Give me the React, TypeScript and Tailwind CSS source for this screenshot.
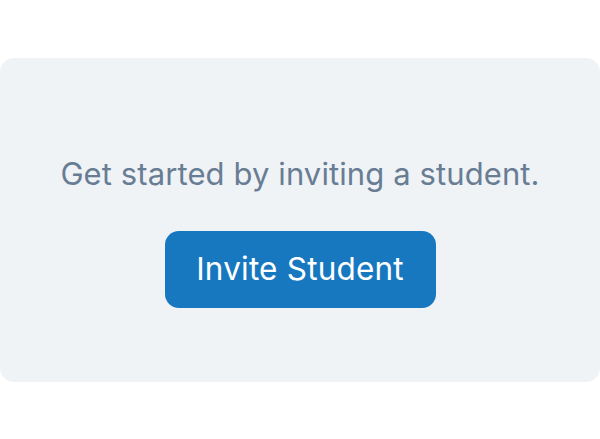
export default function App() {
  return (
    <div className="w-[600px] h-[439px] bg-white flex items-center font-['Inter',sans-serif]">
      <div className="w-full h-[324px] bg-[#eff3f6] rounded-[14px] flex flex-col items-center pt-[96px]">
        <p className="text-[31px] leading-[40px] tracking-[0.1px] text-[#687d94]">
          Get started by inviting a student.
        </p>
        <button
          type="button"
          className="mt-[37px] w-[271px] h-[77px] rounded-[14px] bg-[#1778c0] text-white text-[31.5px] leading-[40px] tracking-[0.2px]"
        >
          Invite Student
        </button>
      </div>
    </div>
  );
}
